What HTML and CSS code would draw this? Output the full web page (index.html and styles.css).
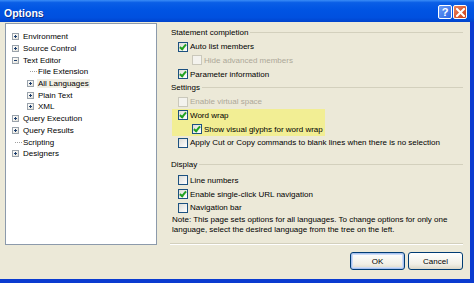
FILE: index.html
```html
<!DOCTYPE html>
<html lang="en">
<head>
    <meta charset="UTF-8">
    <title>Options</title>
    <link rel="stylesheet" href="styles.css">
</head>
<body>

<div class="window">
    <div class="titlebar">
        <span class="title">Options</span>
        <div class="caption-buttons">
            <span class="cap help">?</span>
            <span class="cap close">
                <svg width="9" height="9" viewBox="0 0 9 9"><path d="M1 1 L8 8 M8 1 L1 8" stroke="#fff" stroke-width="2" stroke-linecap="square"/></svg>
            </span>
        </div>
    </div>

    <div class="client">
        <div class="main">
            <div class="tree">
                <div class="node"><span class="exp"></span><span>Environment</span></div>
                <div class="node"><span class="exp"></span><span>Source Control</span></div>
                <div class="node"><span class="exp open"></span><span>Text Editor</span></div>
                <div class="node child"><span class="leaf"></span><span>File Extension</span></div>
                <div class="node child"><span class="exp"></span><span class="selected">All Languages</span></div>
                <div class="node child"><span class="exp"></span><span>Plain Text</span></div>
                <div class="node child"><span class="exp"></span><span>XML</span></div>
                <div class="node"><span class="exp"></span><span>Query Execution</span></div>
                <div class="node"><span class="exp"></span><span>Query Results</span></div>
                <div class="node"><span class="leaf"></span><span>Scripting</span></div>
                <div class="node"><span class="exp"></span><span>Designers</span></div>
            </div>

            <div class="settings">
                <div class="group-title">Statement completion</div>
                <div class="opt"><span class="box checked"></span>Auto list members</div>
                <div class="opt sub disabled"><span class="box"></span>Hide advanced members</div>
                <div class="opt"><span class="box checked"></span>Parameter information</div>

                <div class="group-title">Settings</div>
                <div class="opt disabled"><span class="box"></span>Enable virtual space</div>
                <div class="highlight">
                    <div class="opt"><span class="box checked"></span>Word wrap</div>
                    <div class="opt sub"><span class="box checked"></span>Show visual glyphs for word wrap</div>
                </div>
                <div class="opt"><span class="box"></span>Apply Cut or Copy commands to blank lines when there is no selection</div>

                <div class="group-title display">Display</div>
                <div class="opt"><span class="box"></span>Line numbers</div>
                <div class="opt"><span class="box checked"></span>Enable single-click URL navigation</div>
                <div class="opt"><span class="box"></span>Navigation bar</div>
                <p class="note">Note: This page sets options for all languages. To change options for only one language, select the desired language from the tree on the left.</p>

                <div class="separator"></div>
            </div>
        </div>

        <div class="footer">
            <a href="#" class="btn default">OK</a>
            <a href="#" class="btn">Cancel</a>
        </div>
    </div>
</div>

</body>
</html>
```

FILE: styles.css
```css
body {
    margin: 0;
    font-family: "Liberation Sans", Arial, sans-serif;
    font-size: 8px;
    color: #000;
}

.window {
    width: 474px;
    height: 283px;
    display: flex;
    flex-direction: column;
}

.titlebar {
    height: 22px;
    display: flex;
    align-items: center;
    justify-content: space-between;
    padding: 0 7px 0 4px;
    background: linear-gradient(#3a8cf7 0%, #0a5ee6 12%, #0054e3 45%, #0050df 80%, #0043cc 100%);
}

.title {
    color: #fff;
    font-weight: bold;
    font-size: 10.5px;
    text-shadow: 1px 1px 0 #0b2f8a;
    margin-top: 3px;
}

.caption-buttons {
    display: flex;
    gap: 1px;
    margin-top: 2px;
}

.cap {
    width: 14px;
    height: 14px;
    box-sizing: border-box;
    border: 1px solid #fff;
    border-radius: 2px;
    display: flex;
    align-items: center;
    justify-content: center;
    color: #fff;
    font-weight: bold;
    font-size: 11px;
}

.help {
    background: linear-gradient(135deg, #6c9cf4, #2b66e6);
}

.close {
    background: linear-gradient(135deg, #e8825f, #cf3f17);
}

.client {
    flex: 1;
    background-color: #ece9d8;
    border-right: 4px solid #0a3bd0;
    border-bottom: 4px solid #0a3bd0;
    display: flex;
    flex-direction: column;
}

.main {
    display: flex;
    padding: 1px 0 0 5px;
    height: 222px;
}

.tree {
    width: 152px;
    box-sizing: border-box;
    background-color: #fff;
    border: 1px solid #8c9aab;
    padding: 7px 0 0 6px;
}

.node {
    display: flex;
    align-items: center;
    height: 11.7px;
    white-space: nowrap;
}

.node.child {
    padding-left: 15px;
}

.exp {
    width: 7px;
    height: 7px;
    box-sizing: border-box;
    border: 1px solid #9aa3ac;
    margin-right: 4px;
    position: relative;
    background: linear-gradient(135deg, #fff, #e4e2d8);
}

.exp::before {
    content: "";
    position: absolute;
    left: 1px;
    top: 2px;
    width: 3px;
    height: 1px;
    background-color: #1c3d6e;
}

.exp::after {
    content: "";
    position: absolute;
    left: 2px;
    top: 1px;
    width: 1px;
    height: 3px;
    background-color: #1c3d6e;
}

.exp.open::after {
    display: none;
}

.leaf {
    width: 7px;
    height: 7px;
    margin-right: 4px;
    position: relative;
}

.leaf::before {
    content: "";
    position: absolute;
    left: 3px;
    top: 3px;
    width: 7px;
    border-top: 1px dotted #a0a0a0;
}

.selected {
    background-color: #f0eee4;
    padding: 0 1px;
    margin-left: -1px;
}

.settings {
    width: 293px;
    margin-left: 13px;
    padding-top: 3px;
    display: flex;
    flex-direction: column;
}

.group-title {
    height: 13.75px;
    display: flex;
    align-items: center;
    padding-left: 1px;
    white-space: nowrap;
}

.group-title::after {
    content: "";
    flex: 1;
    border-top: 1px solid #d3d0bd;
    margin-left: 2px;
}

.group-title.display {
    margin-top: 8px;
    margin-bottom: 2px;
}

.opt {
    height: 13.75px;
    display: flex;
    align-items: center;
    padding-left: 8px;
    white-space: nowrap;
}

.opt.sub {
    padding-left: 22px;
}

.box {
    width: 10px;
    height: 10px;
    box-sizing: border-box;
    border: 1px solid #1c5180;
    background: linear-gradient(135deg, #dcdcd7, #fff);
    margin-right: 2px;
    position: relative;
}

.box.checked::after {
    content: "";
    position: absolute;
    left: 2px;
    top: 0;
    width: 2px;
    height: 5px;
    border: solid #21a121;
    border-width: 0 2px 2px 0;
    transform: rotate(40deg);
}

.opt.disabled {
    color: #aca899;
}

.opt.disabled .box {
    border-color: #cac8bb;
    background: #f4f3ee;
}

.highlight {
    background-color: #f2ee94;
    width: 153px;
    margin-left: 2px;
}

.highlight .opt {
    padding-left: 6px;
}

.highlight .opt.sub {
    padding-left: 20px;
}

.note {
    margin: 0;
    padding-left: 2px;
    line-height: 10.5px;
}

.separator {
    margin-top: auto;
    border-top: 1px solid #d3d0bd;
    border-bottom: 1px solid #fff;
}

.footer {
    display: flex;
    justify-content: flex-end;
    gap: 3px;
    padding: 7px 7px 0 0;
}

.btn {
    width: 55px;
    height: 18px;
    box-sizing: border-box;
    border: 1px solid #003c74;
    border-radius: 3px;
    background: linear-gradient(#fff, #f1efe6 70%, #dcd8c8);
    display: flex;
    align-items: center;
    justify-content: center;
    color: #000;
    text-decoration: none;
}

.btn.default {
    box-shadow: inset 0 0 0 1px #a8c2ef, inset 0 0 0 2px #cddcf6;
}
```
